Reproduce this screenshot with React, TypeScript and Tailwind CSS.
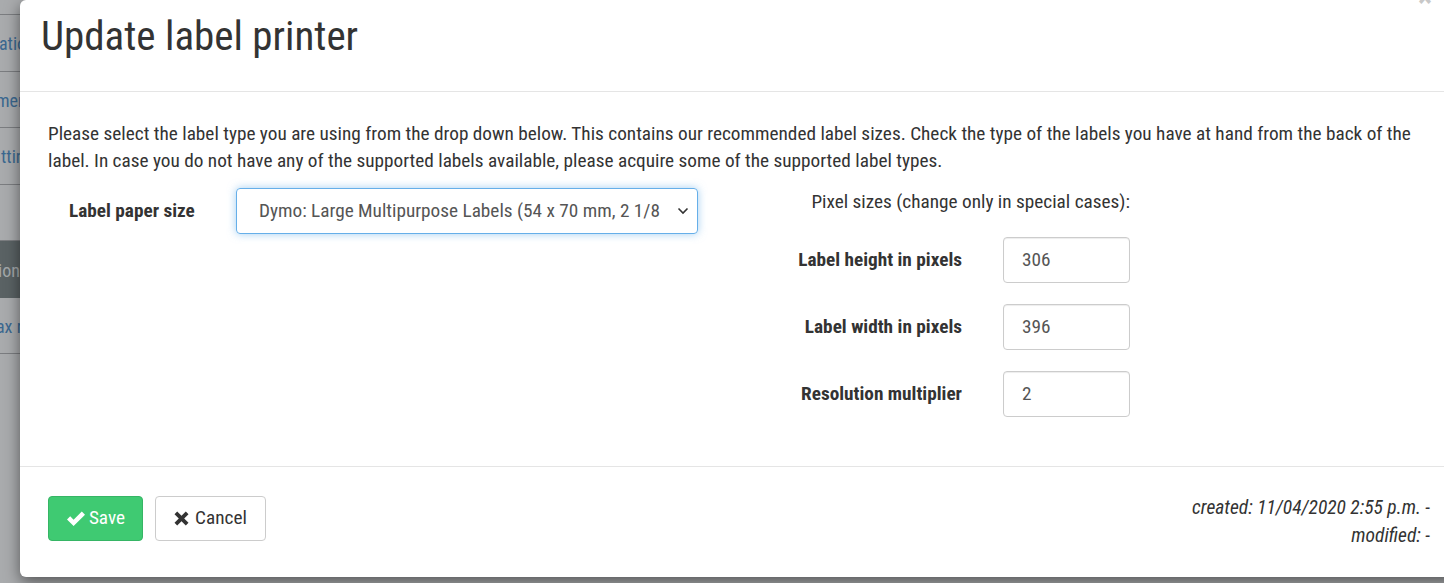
import React from 'react';

const sideRows = [
  { text: 'ation', shift: 'ml-[-1px]', dark: false },
  { text: 'ments', shift: 'ml-[-4px]', dark: false },
  { text: 'ttings', shift: 'ml-[1px]', dark: false },
  { text: '', shift: '', dark: false },
  { text: 'ions', shift: 'ml-[-2px]', dark: true },
  { text: 'ax rates', shift: 'ml-[-4px]', dark: false },
];

const pixelFields = [
  { label: 'Label height in pixels', value: '306' },
  { label: 'Label width in pixels', value: '396' },
  { label: 'Resolution multiplier', value: '2' },
];

function CheckIcon() {
  return (
    <svg width="20" height="18" viewBox="0 0 20 18" fill="white">
      <path d="M1 9.5 L4.2 6.3 L7.6 9.7 L15.8 1.5 L19 4.7 L7.6 16.1 Z" />
    </svg>
  );
}

function TimesIcon() {
  return (
    <svg width="15" height="15" viewBox="0 0 15 15" fill="#333">
      <path d="M0.5 3.2 L3.2 0.5 L7.5 4.8 L11.8 0.5 L14.5 3.2 L10.2 7.5 L14.5 11.8 L11.8 14.5 L7.5 10.2 L3.2 14.5 L0.5 11.8 L4.8 7.5 Z" />
    </svg>
  );
}

export default function App() {
  return (
    <div className="relative w-[1444px] h-[583px] overflow-hidden bg-[#a9abad] font-['Roboto_Condensed',Roboto,sans-serif]">
      {/* Sidebar of the page behind the overlay */}
      <div className="w-[200px] flex flex-col text-[18px] text-[#3b6890]">
        <div className="h-[15px] border-b border-[#7b7d80]" />
        {sideRows.map((r, i) => (
          <div
            key={i}
            className={`h-[56.5px] flex items-center pt-[2px] whitespace-nowrap ${
              r.dark ? 'bg-[#5a6264] text-[#a3a8aa]' : 'border-b border-[#7b7d80]'
            }`}
          >
            <span className={r.shift}>{r.text}</span>
          </div>
        ))}
      </div>

      {/* Modal */}
      <div className="absolute left-[20px] top-0 w-[1438px] h-[577px] bg-white rounded-[6px] shadow-[0_5px_15px_rgba(0,0,0,0.5)] flex flex-col text-[#333]">
        {/* Header */}
        <div className="relative h-[92px] border-b border-[#e5e5e5] px-[21px] pt-[12px]">
          <h1 className="text-[41px] leading-[48px] font-normal">Update label printer</h1>
          <span className="absolute left-[1398px] top-[-26px] text-[30px] font-bold text-[#c8c8c8]">×</span>
        </div>

        {/* Body */}
        <div className="h-[375px] border-b border-[#e5e5e5] px-[28px] pt-[28px]">
          <p className="text-[19.25px] leading-[27px]">
            Please select the label type you are using from the drop down below. This contains our recommended label
            sizes. Check the type of the labels you have at hand from the back of the label. In case you do not have any
            of the supported labels available, please acquire some of the supported label types.
          </p>

          <div className="flex mt-[14px]">
            {/* Left column */}
            <div className="w-[680px] flex items-center h-[46px]">
              <label className="w-[188px] pl-[21px] text-[19.25px] font-bold">Label paper size</label>
              <div className="relative w-[462px] h-[46px] rounded-[4px] border border-[#66afe9] shadow-[0_0_8px_rgba(102,175,233,0.6)] flex items-center pl-[22px] pr-[37px] overflow-hidden">
                <span className="whitespace-nowrap text-[19.25px] text-[#555] overflow-hidden">
                  Dymo: Large Multipurpose Labels (54 x 70 mm, 2 1/8 x 2 3/4 in)
                </span>
                <svg className="absolute right-[8px] top-[18px]" width="12" height="8" viewBox="0 0 12 8" fill="none" stroke="#333" strokeWidth="1.6">
                  <path d="M1.5 1.5 L6 6 L10.5 1.5" />
                </svg>
              </div>
            </div>

            {/* Right column */}
            <div className="w-[402px] flex flex-col">
              <div className="text-right text-[19.25px] leading-[27px]">
                Pixel sizes (change only in special cases):
              </div>
              <div className="flex flex-col gap-[21px] mt-[22px]">
                {pixelFields.map((f) => (
                  <div key={f.label} className="flex items-center justify-end">
                    <label className="text-[19.25px] font-bold mr-[41px]">{f.label}</label>
                    <div className="w-[127px] h-[46px] rounded-[4px] border border-[#ccc] shadow-[inset_0_1px_1px_rgba(0,0,0,0.075)] flex items-center pl-[18px] text-[19.25px] text-[#555]">
                      {f.value}
                    </div>
                  </div>
                ))}
              </div>
            </div>
          </div>
        </div>

        {/* Footer */}
        <div className="flex-1 flex items-start justify-between px-[28px] pt-[29px]">
          <div className="flex gap-[12px]">
            <button className="h-[45px] w-[95px] rounded-[4px] bg-[#3fca72] border border-[#36b565] text-white text-[19.25px] flex items-center justify-center gap-[3px]">
              <CheckIcon />
              <span>Save</span>
            </button>
            <button className="h-[45px] w-[111px] rounded-[4px] bg-white border border-[#ccc] text-[#333] text-[19.25px] flex items-center justify-center gap-[6px]">
              <TimesIcon />
              <span>Cancel</span>
            </button>
          </div>
          <div className="text-right italic text-[19.5px] leading-[28px] mt-[-2px]">
            <div>created: 11/04/2020 2:55 p.m. -</div>
            <div>modified: -</div>
          </div>
        </div>
      </div>
    </div>
  );
}
